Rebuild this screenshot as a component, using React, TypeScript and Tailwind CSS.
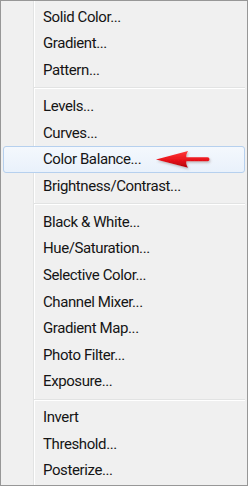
import React from "react";

type Entry = { label: string } | { sep: true };

const entries: Entry[] = [
  { label: "Solid Color..." },
  { label: "Gradient..." },
  { label: "Pattern..." },
  { sep: true },
  { label: "Levels..." },
  { label: "Curves..." },
  { label: "Color Balance..." },
  { label: "Brightness/Contrast..." },
  { sep: true },
  { label: "Black & White..." },
  { label: "Hue/Saturation..." },
  { label: "Selective Color..." },
  { label: "Channel Mixer..." },
  { label: "Gradient Map..." },
  { label: "Photo Filter..." },
  { label: "Exposure..." },
  { sep: true },
  { label: "Invert" },
  { label: "Threshold..." },
  { label: "Posterize..." },
];

function Arrow() {
  return (
    <svg
      className="absolute left-[152px] top-0"
      width="60"
      height="27"
      viewBox="0 0 60 27"
    >
      <defs>
        <linearGradient id="ag" x1="0" y1="0" x2="0" y2="1">
          <stop offset="0" stopColor="#ff3b3b" />
          <stop offset="0.55" stopColor="#e8121a" />
          <stop offset="1" stopColor="#b00008" />
        </linearGradient>
        <filter id="sh" x="-20%" y="-30%" width="140%" height="170%">
          <feDropShadow dx="1" dy="1.5" stdDeviation="1.2" floodColor="#7a6a6a" floodOpacity="0.45" />
        </filter>
      </defs>
      <path
        d="M0 12.4 L32 4 Q29.5 8.5 30.5 10.3 L51.5 10.3 Q53.5 10.3 53.5 12.3 Q53.5 14.3 51.5 14.3 L30.5 14.3 Q29.5 16.5 32 20.8 Z"
        fill="url(#ag)"
        filter="url(#sh)"
      />
    </svg>
  );
}

export default function App() {
  return (
    <div className="w-[250px] h-[488px] bg-white">
      <div
        className="w-[248px] h-[486px] border border-[#979797] bg-[linear-gradient(to_right,#f0f0f0_32px,#e2e3e3_32px,#e2e3e3_33px,#ffffff_33px,#ffffff_34px,#f0f0f0_34px)] pt-[3px] px-[2px] flex flex-col"
        style={{ fontFamily: 'Roboto, "Noto Sans", Arial, sans-serif' }}
      >
        {entries.map((e, i) =>
          "sep" in e ? (
            <div key={i} className="h-[9.4px] shrink-0 flex flex-col justify-center pl-[31px]">
              <div className="h-[2px] border-t border-[#e2e3e3] border-b border-b-white" />
            </div>
          ) : (
            <div
              key={i}
              className={
                "relative h-[26.6px] shrink-0 flex items-center text-[15px] tracking-[-0.4px] text-[#151515] " +
                (e.label === "Color Balance..."
                  ? "rounded-[3px] border border-[#b6d0ee] bg-[linear-gradient(#f4f8fd,#e9f1fb)] pl-[39px]"
                  : "pl-[40px]")
              }
            >
              <span className="leading-none">{e.label}</span>
              {e.label === "Color Balance..." && <Arrow />}
            </div>
          )
        )}
      </div>
    </div>
  );
}
